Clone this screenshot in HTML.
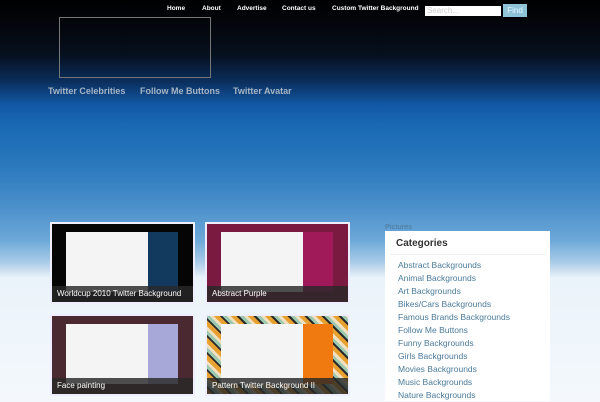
<!DOCTYPE html>
<html><head><style>
*{margin:0;padding:0;box-sizing:border-box}
html{background:#f4f8fc}
body{width:600px;height:400px;overflow:hidden;position:relative;font-family:"Liberation Sans",sans-serif;
background:linear-gradient(180deg,#000 0,#03060c 25px,#06101e 55px,#0a2c58 80px,#1258a6 105px,#1a68b4 125px,#2272b8 150px,#3580c2 180px,#4e92cc 210px,#6ca8d8 240px,#a9cbe8 262px,#eaf3fa 278px,#f4f8fc 400px);}
.nav{position:absolute;top:5px;font-size:6.5px;font-weight:bold;color:#fff;white-space:nowrap}
.box{position:absolute;left:59px;top:17px;width:152px;height:61px;border:1px solid #777}
.sub{position:absolute;top:86px;font-size:9px;font-weight:bold;color:#a8b4c4;white-space:nowrap}
.card{position:absolute;width:145px;height:82px;border:2px solid #eef;background:#fff;overflow:hidden}
.card .scr{position:absolute;inset:0}
.card .cap{position:absolute;left:0;right:0;bottom:0;height:16px;background:rgba(40,40,40,.82);color:#fff;font-size:8px;padding:3px 5px;white-space:nowrap}
.pan{position:absolute;left:14px;top:8px;width:82px;height:60px;background:#f4f4f4}
.side{position:absolute;left:96px;top:8px;width:30px;height:60px}
.cats{position:absolute;left:385px;top:231px;width:165px;height:170px;background:#fff}
.cats h3{font-size:10px;color:#333;padding:7px 0 5px 6px;border-bottom:1px solid #eee;margin:0 5px}
.cats div{font-size:8.5px;color:#4a7a9a;padding-left:13px;height:13px;line-height:13px;white-space:nowrap}
</style></head><body>
<div class="nav" style="left:167px">Home</div>
<div class="nav" style="left:202px">About</div>
<div class="nav" style="left:237px">Advertise</div>
<div class="nav" style="left:282px">Contact us</div>
<div class="nav" style="left:332px">Custom Twitter Background</div>
<div style="position:absolute;left:425px;top:6px;width:76px;height:10px;background:#fff;font-size:8px;color:#ccc;line-height:10px;padding-left:2px">Search...</div>
<div style="position:absolute;left:503px;top:4px;width:24px;height:13px;background:#8ec3d8;color:#e8f6ff;font-size:8px;text-align:center;line-height:13px">Find</div>
<div class="box"></div>
<div class="sub" style="left:48px">Twitter Celebrities</div>
<div class="sub" style="left:140px">Follow Me Buttons</div>
<div class="sub" style="left:233px">Twitter Avatar</div>

<div class="card" style="left:50px;top:222px"><div class="scr" style="background:#050505"></div><div class="pan"></div><div class="side" style="background:#123a5e"></div><div class="cap">Worldcup 2010 Twitter Background</div></div>
<div class="card" style="left:205px;top:222px"><div class="scr" style="background:#7a1a40"></div><div class="pan"></div><div class="side" style="background:#a01a5a"></div><div class="cap">Abstract Purple</div></div>
<div class="card" style="left:50px;top:314px"><div class="scr" style="background:#4a2a30"></div><div class="pan"></div><div class="side" style="background:#a8a8d8"></div><div class="cap">Face painting</div></div>
<div class="card" style="left:205px;top:314px"><div class="scr" style="background:repeating-linear-gradient(45deg,#e8a030 0 4px,#2a2a2a 4px 6px,#9ac8b0 6px 9px,#f0e0c0 9px 12px)"></div><div class="pan"></div><div class="side" style="background:#f07a10"></div><div class="cap">Pattern Twitter Background II</div></div>

<div style="position:absolute;left:385px;top:222px;font-size:7.5px;color:#4a7a9a">Pictures</div>
<div class="cats"><h3>Categories</h3>
<div style="margin-top:4px">Abstract Backgrounds</div><div>Animal Backgrounds</div><div>Art Backgrounds</div><div>Bikes/Cars Backgrounds</div><div>Famous Brands Backgrounds</div><div>Follow Me Buttons</div><div>Funny Backgrounds</div><div>Girls Backgrounds</div><div>Movies Backgrounds</div><div>Music Backgrounds</div><div>Nature Backgrounds</div>
</div>
</body></html>
